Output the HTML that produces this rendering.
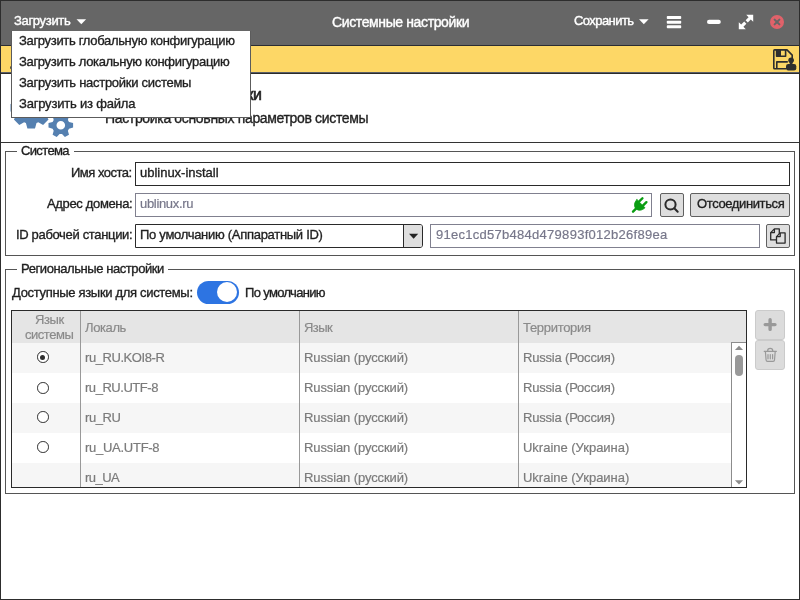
<!DOCTYPE html>
<html lang="ru">
<head>
<meta charset="utf-8">
<title>Системные настройки</title>
<style>
html,body{margin:0;padding:0;width:800px;height:600px;overflow:hidden;background:#fff}
body{position:relative;font-family:"Liberation Sans",sans-serif;font-size:13px;color:#222}
.abs,.t,svg.ic{position:absolute}
.t{white-space:nowrap;line-height:20px;height:20px;margin:0;padding:0;will-change:transform}
.w{color:#fff;-webkit-text-stroke:0.4px #fff}
.k{color:#1f1f1f;-webkit-text-stroke:0.35px #1f1f1f}
.b{-webkit-text-stroke:0.6px #1f1f1f}
.p{color:#77778a;-webkit-text-stroke:0.2px #77778a}
.g{color:#8a8a8a;-webkit-text-stroke:0.2px #8a8a8a}
.d{color:#7b7b7b;-webkit-text-stroke:0.2px #7b7b7b}
#win{left:0;top:0;width:798px;height:598px;border:1px solid #2d2d2d;z-index:50;pointer-events:none}
#titlebar{left:1px;top:1px;width:798px;height:44px;background:#666}
#tline{left:1px;top:45px;width:798px;height:1px;background:#2b2d33}
#ybar{left:1px;top:46px;width:798px;height:26px;background:#fdd766}
#yline1{left:1px;top:72px;width:798px;height:1px;background:#5a5e66}
#yline2{left:1px;top:73px;width:798px;height:1px;background:#2a2a2a}
#hline{left:1px;top:142px;width:798px;height:1px;background:#333}
.fs{border:1px solid #555;box-sizing:border-box}
.gap{background:#fff;height:1px}
.inp{box-sizing:border-box;border:1px solid #2a2a2a;background:#fff;height:24px}
.inp.ro{border-color:#80808f}
.btn{box-sizing:border-box;border:1px solid #606060;background:#dedede;border-radius:2px;height:24px}
.btn.dis{border-color:#cbcbcb;background:#dcdcdc;border-radius:3px;height:30px;width:30px}
#tbl{left:11px;top:310px;width:734px;height:176px;border:1px solid #2a2a2a;overflow:hidden;background:#fff}
#thead{left:0;top:0;width:734px;height:32px;background:#e5e5e5}
#tbody{left:0;top:32px;width:719px;height:144px;overflow:hidden}
.row{left:0;width:719px;height:30px;background:#f6f6f6}
.vl{top:0;width:1px;height:176px;background:#999}
#sb{left:719px;top:31px;width:15px;height:146px;box-sizing:border-box;border-left:1px solid #8c8c8c;border-top:1px solid #8c8c8c;background:#fff}
#thumb{left:723px;top:44px;width:8px;height:21px;border-radius:4px;background:#999}
.radio{width:9.6px;height:9.6px;border:1.3px solid #2e2e2e;border-radius:50%;background:#fff}
.radio i{position:absolute;left:2.3px;top:2.3px;width:5px;height:5px;border-radius:50%;background:#2e2e2e}
#menu{left:11px;top:31px;width:238px;height:86px;background:#fff;border:1px solid #5c5c5c;border-top:none;z-index:20}
#toggle{left:197px;top:280.5px;width:42px;height:23px;border-radius:11.5px;background:#2d74e2}
#knob{left:19.5px;top:1.5px;width:20px;height:20px;border-radius:50%;background:#fff}
</style>
</head>
<body>
<div class="abs" id="titlebar"></div>
<div class="abs" id="tline"></div>
<div class="abs" id="ybar"></div>
<div class="abs" id="yline1"></div>
<div class="abs" id="yline2"></div>
<div class="abs" id="hline"></div>

<!-- fieldsets -->
<div class="abs fs" style="left:5px;top:151px;width:790px;height:105px"></div>
<div class="abs gap" style="left:17px;top:151px;width:57px"></div>
<div class="abs fs" style="left:5px;top:269px;width:790px;height:225px"></div>
<div class="abs gap" style="left:17px;top:269px;width:151px"></div>

<!-- inputs / buttons -->
<div class="abs inp" style="left:135px;top:162px;width:655px"></div>
<div class="abs inp ro" style="left:135px;top:193px;width:517px"></div>
<div class="abs btn" style="left:660px;top:193px;width:24px"></div>
<div class="abs btn" style="left:690px;top:193px;width:100px"></div>
<div class="abs inp" style="left:135px;top:224px;width:288px;border-radius:0 3px 3px 0"></div>
<div class="abs" style="left:404px;top:225px;width:18px;height:22px;background:#dedede;border-radius:0 2px 2px 0"></div>
<div class="abs" style="left:403px;top:225px;width:1px;height:22px;background:#2a2a2a"></div>
<div class="abs inp ro" style="left:430px;top:224px;width:330px"></div>
<div class="abs btn" style="left:766px;top:224px;width:24px"></div>
<div class="abs btn dis" style="left:755px;top:310px"></div>
<div class="abs btn dis" style="left:755px;top:340px"></div>

<!-- toggle -->
<div class="abs" id="toggle"><div class="abs" id="knob"></div></div>

<!-- table -->
<div class="abs" id="tbl">
  <div class="abs" id="thead"></div>
  <div class="abs" id="tbody">
    <div class="abs row" style="top:0"></div>
    <div class="abs row" style="top:60px"></div>
    <div class="abs row" style="top:120px"></div>
    <div class="abs radio" style="left:25px;top:8.4px"><i></i></div>
    <div class="abs radio" style="left:25px;top:39.4px"></div>
    <div class="abs radio" style="left:25px;top:68.4px"></div>
    <div class="abs radio" style="left:25px;top:98.4px"></div>
<span class="t d" style="left:72.6px;top:4.9px;font-size:13px;letter-spacing:-0.430px">ru_RU.KOI8-R</span>
<span class="t d" style="left:291.8px;top:4.9px;font-size:13px;letter-spacing:-0.106px">Russian (русский)</span>
<span class="t d" style="left:511.0px;top:4.9px;font-size:13px;letter-spacing:-0.189px">Russia (Россия)</span>
<span class="t d" style="left:72.6px;top:34.9px;font-size:13px;letter-spacing:-0.462px">ru_RU.UTF-8</span>
<span class="t d" style="left:291.8px;top:34.9px;font-size:13px;letter-spacing:-0.106px">Russian (русский)</span>
<span class="t d" style="left:511.0px;top:34.9px;font-size:13px;letter-spacing:-0.189px">Russia (Россия)</span>
<span class="t d" style="left:72.6px;top:64.9px;font-size:13px;letter-spacing:-0.445px">ru_RU</span>
<span class="t d" style="left:291.8px;top:64.9px;font-size:13px;letter-spacing:-0.106px">Russian (русский)</span>
<span class="t d" style="left:511.0px;top:64.9px;font-size:13px;letter-spacing:-0.189px">Russia (Россия)</span>
<span class="t d" style="left:72.6px;top:94.9px;font-size:13px;letter-spacing:-0.270px">ru_UA.UTF-8</span>
<span class="t d" style="left:291.8px;top:94.9px;font-size:13px;letter-spacing:-0.106px">Russian (русский)</span>
<span class="t d" style="left:511.0px;top:94.9px;font-size:13px;letter-spacing:-0.016px">Ukraine (Украина)</span>
<span class="t d" style="left:72.6px;top:124.9px;font-size:13px;letter-spacing:-0.540px">ru_UA</span>
<span class="t d" style="left:291.8px;top:124.9px;font-size:13px;letter-spacing:-0.106px">Russian (русский)</span>
<span class="t d" style="left:511.0px;top:124.9px;font-size:13px;letter-spacing:-0.016px">Ukraine (Украина)</span>
  </div>
  <div class="abs vl" style="left:68px"></div>
  <div class="abs vl" style="left:287px"></div>
  <div class="abs vl" style="left:506px"></div>
  <div class="abs" id="sb"></div>
  <div class="abs" id="thumb"></div>
</div>

<!-- texts -->
<span class="t w" style="left:14.2px;top:10.9px;font-size:13px;letter-spacing:-0.332px">Загрузить</span>
<span class="t w" style="left:331.5px;top:11.7px;font-size:14px;letter-spacing:-0.380px">Системные настройки</span>
<span class="t w" style="left:574.0px;top:10.9px;font-size:13px;letter-spacing:-0.564px">Сохранить</span>
<span class="t k b" style="left:105.0px;top:84.7px;font-size:16px;letter-spacing:-0.442px">Системные настройки</span>
<span class="t k" style="left:105.0px;top:107.7px;font-size:14px;letter-spacing:-0.344px">Настройка основных параметров системы</span>
<span class="t k" style="left:20.5px;top:140.5px;font-size:13px;letter-spacing:-0.643px">Система</span>
<span class="t k" style="left:71.0px;top:163.0px;font-size:13px;letter-spacing:-0.497px">Имя хоста:</span>
<span class="t k" style="left:46.5px;top:194.1px;font-size:13px;letter-spacing:-0.345px">Адрес домена:</span>
<span class="t k" style="left:15.6px;top:225.3px;font-size:13px;letter-spacing:-0.336px">ID рабочей станции:</span>
<span class="t k" style="left:140.4px;top:163.0px;font-size:13px;letter-spacing:-0.012px">ublinux-install</span>
<span class="t p" style="left:140.4px;top:194.1px;font-size:13px;letter-spacing:-0.319px">ublinux.ru</span>
<span class="t k" style="left:140.0px;top:225.3px;font-size:13px;letter-spacing:-0.289px">По умолчанию (Аппаратный ID)</span>
<span class="t p" style="left:435.6px;top:225.3px;font-size:13px;letter-spacing:0.275px">91ec1cd57b484d479893f012b26f89ea</span>
<span class="t k" style="left:696.5px;top:194.1px;font-size:13px;letter-spacing:-0.383px">Отсоединиться</span>
<span class="t k" style="left:20.5px;top:259.1px;font-size:13px;letter-spacing:-0.425px">Региональные настройки</span>
<span class="t k" style="left:12.0px;top:282.8px;font-size:13px;letter-spacing:-0.319px">Доступные языки для системы:</span>
<span class="t k" style="left:244.8px;top:282.8px;font-size:13px;letter-spacing:-0.666px">По умолчанию</span>
<span class="t g" style="left:35.2px;top:309.7px;font-size:13px;letter-spacing:-0.364px">Язык</span>
<span class="t g" style="left:25.2px;top:324.9px;font-size:13px;letter-spacing:-0.466px">системы</span>
<span class="t g" style="left:84.7px;top:317.5px;font-size:13px;letter-spacing:-0.386px">Локаль</span>
<span class="t g" style="left:303.8px;top:317.5px;font-size:13px;letter-spacing:-0.564px">Язык</span>
<span class="t g" style="left:523.0px;top:317.5px;font-size:13px;letter-spacing:-0.304px">Территория</span>

<!-- icons -->
<svg class="ic" id="icons" style="left:0;top:0" width="800" height="600" viewBox="0 0 800 600">
  <!-- title arrows -->
  <path d="M76.5 19.3h9.6l-4.8 5z" fill="#fff"/>
  <path d="M639 19.3h9.6l-4.8 5z" fill="#fff"/>
  <!-- hamburger -->
  <g fill="#fff"><rect x="666.8" y="16" width="14.4" height="3" rx="0.8"/><rect x="666.8" y="20.7" width="14.4" height="3" rx="0.8"/><rect x="666.8" y="25.2" width="14.4" height="3" rx="0.8"/></g>
  <!-- minimize -->
  <rect x="707" y="19.8" width="13.8" height="4.2" rx="2.1" fill="#fff"/>
  <!-- expand -->
  <g fill="#fff" stroke="none"><path d="M753.2 14.8v7l-2.4-2.4-3 3-2.2-2.2 3-3-2.4-2.4z"/><path d="M738.8 29.2v-7l2.4 2.4 3-3 2.2 2.2-3 3 2.4 2.4z"/></g>
  <!-- close -->
  <circle cx="777" cy="22" r="7" fill="#e0626a"/>
  <path d="M774.6 19.6l4.8 4.8M779.4 19.6l-4.8 4.8" stroke="#666" stroke-width="2" stroke-linecap="round"/>
  <!-- save (floppy + user) -->
  <g fill="none" stroke="#2e2e2e" stroke-width="1.6" stroke-linejoin="round">
    <path d="M774.6 49.9h12.4l5.2 5.2v4M786 68.8h-11.4a0.8 0.8 0 0 1-0.8-0.8v-17.3a0.8 0.8 0 0 1 0.8-0.8"/>
    <path d="M776.6 50v6.3h9V50"/>
    <path d="M776.8 68.8v-6.9h11"/>
  </g>
  <rect x="776.6" y="50" width="4.4" height="6.3" fill="#2e2e2e"/>
  <circle cx="791.1" cy="60.3" r="2.8" fill="#2e2e2e"/>
  <rect x="789.7" y="62" width="2.8" height="3" fill="#2e2e2e"/>
  <rect x="786" y="64" width="10.3" height="6.5" rx="2.2" fill="#2e2e2e"/>
  <rect x="10.2" y="66.4" width="1" height="2.4" fill="#3a3a3a"/>
  <!-- gears -->
  <g fill="#5580b0" id="gears"><path fill-rule="evenodd" d="M46.5 102.4L51.9 103.9L51.9 111.5L46.5 113.0L45.8 114.8L48.5 119.6L43.1 125.0L38.3 122.3L36.5 123.0L35.0 128.4L27.4 128.4L25.9 123.0L24.1 122.3L19.3 125.0L13.9 119.6L16.6 114.8L15.9 113.0L10.5 111.5L10.5 103.9L15.9 102.4L16.6 100.6L13.9 95.8L19.3 90.4L24.1 93.1L25.9 92.4L27.4 87.0L35.0 87.0L36.5 92.4L38.3 93.1L43.1 90.4L48.5 95.8L45.8 100.6ZM23.7 107.7a7.5 7.5 0 1 0 15.0 0a7.5 7.5 0 1 0 -15.0 0Z"/><path fill-rule="evenodd" d="M69.0 121.9L73.1 123.0L73.1 127.6L69.0 128.7L67.9 130.7L69.0 134.8L64.9 137.1L62.0 134.1L59.6 134.1L56.7 137.1L52.6 134.8L53.7 130.7L52.6 128.7L48.5 127.6L48.5 123.0L52.6 121.9L53.7 119.9L52.6 115.8L56.7 113.5L59.6 116.5L62.0 116.5L64.9 113.5L69.0 115.8L67.9 119.9ZM56.5 125.3a4.3 4.3 0 1 0 8.6 0a4.3 4.3 0 1 0 -8.6 0Z"/></g>
  <!-- plug -->
  <g transform="translate(640.95 203.7) rotate(45)" fill="#0a9d12" stroke="#0a9d12" stroke-linecap="round">
    <path d="M-5.7 0h11.4c0 4.2-2.5 7-5.7 7s-5.7-2.8-5.7-7z" stroke-width="0.8"/>
    <path d="M-2.8 0v-4.9M2.8 0v-4.9M0 6v5.2" stroke-width="2.4" fill="none"/>
  </g>
  <!-- search -->
  <g fill="none" stroke="#2a2a2a" stroke-width="2" stroke-linecap="round"><circle cx="670.5" cy="204.5" r="5.1"/><path d="M674.3 208.3l3.4 3.4"/></g>
  <!-- select arrow -->
  <path d="M409 233.8h9.2l-4.6 4.9z" fill="#222"/>
  <!-- copy -->
  <g fill="#dedede" stroke="#2a2a2a" stroke-width="1.3" stroke-linejoin="round">
    <path d="M774.4 228.9h4.9v11h-8.6v-7.3z"/><path d="M774.4 228.9v3.7h-3.7" fill="none"/>
    <path d="M780.2 232.9h4.9v10.2h-8.6v-6.5z"/><path d="M780.2 232.9v3.7h-3.7" fill="none"/>
  </g>
  <!-- plus -->
  <path d="M765.2 324.6h9.8M770.1 319.8v9.6" stroke="#999" stroke-width="3.4" stroke-linecap="round" fill="none"/>
  <!-- trash -->
  <g fill="none" stroke="#999" stroke-width="1.2" stroke-linecap="round" stroke-linejoin="round">
    <path d="M764.2 351.3h12.2M767.6 351.1c0-3.6 5.2-3.6 5.2 0M765.4 351.6l0.7 8.4a1.4 1.4 0 0 0 1.4 1.3h5.6a1.4 1.4 0 0 0 1.4-1.3l0.7-8.4M768 354.5v4.3M770.3 354.5v4.3M772.6 354.5v4.3"/>
  </g>
  <!-- scrollbar arrows -->
  <path d="M734.9 350h8.2l-4.1-4.2z" fill="#8c8c8c"/>
  <path d="M734.9 480.2h8.2l-4.1 4.2z" fill="#8c8c8c"/>
</svg>

<!-- dropdown menu -->
<div class="abs" id="menu">
<span class="t k" style="left:7.3px;top:-0.0px;font-size:13px;letter-spacing:-0.325px">Загрузить глобальную конфигурацию</span>
<span class="t k" style="left:7.3px;top:21.0px;font-size:13px;letter-spacing:-0.324px">Загрузить локальную конфигурацию</span>
<span class="t k" style="left:7.3px;top:42.0px;font-size:13px;letter-spacing:-0.281px">Загрузить настройки системы</span>
<span class="t k" style="left:7.3px;top:63.0px;font-size:13px;letter-spacing:-0.201px">Загрузить из файла</span>
</div>
<div class="abs" id="win"></div>
</body>
</html>
